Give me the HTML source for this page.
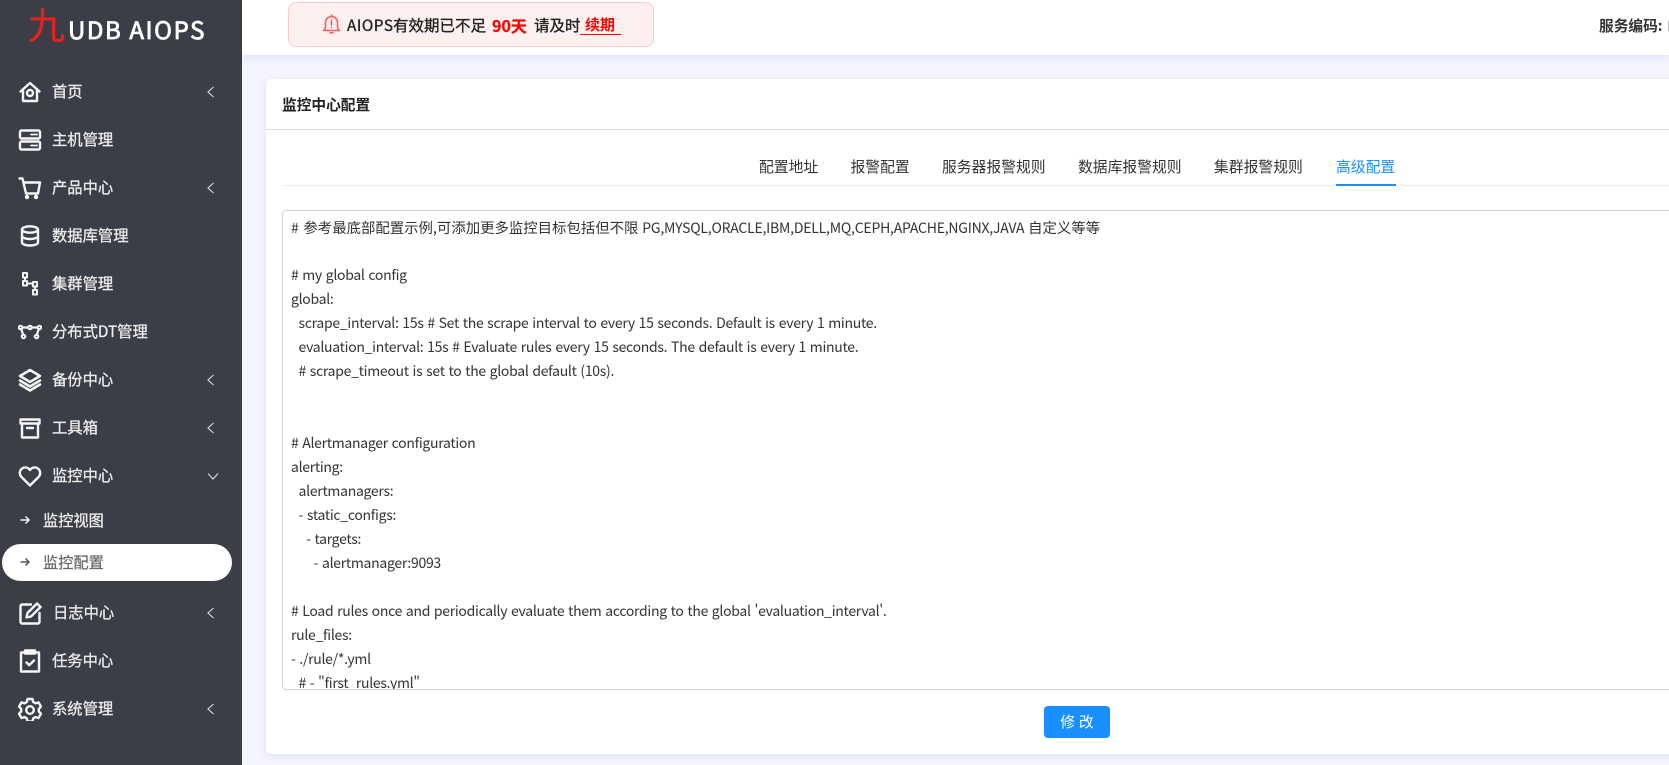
<!DOCTYPE html>
<html lang="zh"><head><meta charset="utf-8"><title>UDB AIOPS</title>
<style>
*{box-sizing:border-box}
html,body{margin:0;padding:0;width:1669px;height:765px;overflow:hidden;background:#f5f5ff;font-family:"Liberation Sans","Noto Sans CJK SC",sans-serif}
.a{position:absolute;white-space:nowrap}
#side{position:absolute;left:0;top:0;width:242px;height:765px;background:#3c3e47}
.m{position:absolute;left:52px;margin-top:-1px;font-size:15.3px;line-height:24px;color:#ececec;font-weight:400;-webkit-text-stroke:.3px #ececec;white-space:nowrap;font-family:"Noto Sans CJK SC",sans-serif}
.i{position:absolute;left:18px;width:24px;height:24px;fill:none;stroke:#f6f6f6;stroke-width:2.4;stroke-linejoin:round;stroke-linecap:round}
.c{position:absolute;left:206px;width:10px;height:14px;fill:none;stroke:#dcdcdc;stroke-width:1.1}
.ar{position:absolute;left:19px;width:12px;height:12px;fill:none;stroke:#f2f2f2;stroke-width:1.5}
.t{position:absolute;top:155px;line-height:24px;font-size:14.8px;color:#333;white-space:nowrap;font-family:"Noto Sans CJK SC",sans-serif}
.b{position:absolute;top:13px;line-height:24px;white-space:nowrap;font-family:"Noto Sans CJK SC",sans-serif;font-size:15.5px;color:#222;-webkit-text-stroke:.35px #222}
#code{position:absolute;left:282px;top:210px;width:1400px;height:480px;border:1px solid #d2d2d2;border-radius:4px;background:#fff;overflow:hidden;padding:4px 0 0 8px}
#code div{height:24px;line-height:24px;white-space:pre;font-family:"Noto Sans CJK SC",sans-serif;font-size:14px;letter-spacing:-.29px;word-spacing:.93px;color:#333}
#code div:first-child{position:relative;top:1px;letter-spacing:-.22px}
#code span{font-size:14.4px;letter-spacing:0;word-spacing:0}
</style></head><body>
<div class="a" style="left:242px;top:0;width:1427px;height:55px;background:#fff;box-shadow:0 2px 8px rgba(110,110,230,.16)"></div>
<div class="a" style="left:288px;top:2px;width:366px;height:45px;background:#fff0f0;border:1px solid #ffc9c9;border-radius:8px"></div>
<svg class="a" style="left:322px;top:14px" width="19" height="21" viewBox="0 0 19 21" fill="none" stroke="#ff5c5c" stroke-width="1.6" stroke-linejoin="round" stroke-linecap="round"><path d="M1.500 16.500c1.400-1 2-2.200 2-4.200V8.500a6 6 0 0 1 12 0v3.800c0 2 .6 3.200 2 4.200z"/><path d="M8 18.700h3M9.500 1v1.300M9.500 6v5M9.500 13.200v.4"/></svg>
<div class="b" style="left:347px;font-size:15.3px;letter-spacing:.55px">AIOPS</div>
<div class="b" style="left:393px">有效期已不足</div>
<div class="b" style="left:492px;font-size:16px;font-weight:700;color:#f00;-webkit-text-stroke:.2px #f00">90天</div>
<div class="b" style="left:534px">请及时</div>
<div class="b" style="left:585px;font-size:15px;font-weight:700;color:#f00;-webkit-text-stroke:0">续期</div>
<div class="a" style="left:580px;top:34px;width:41px;height:1px;background:#f00"></div>
<div class="a" style="left:1599px;top:14px;line-height:24px;font-size:14.7px;font-weight:700;color:#333;font-family:'Noto Sans CJK SC',sans-serif">服务编码:</div>
<div class="a" style="left:1668px;top:21px;width:1px;height:10px;background:#bbb"></div>

<div class="a" style="left:266px;top:79px;width:1440px;height:675px;background:#fff;border-radius:5px;box-shadow:0 2px 8px rgba(110,110,230,.18)"></div>
<div class="a" style="left:282px;top:93px;line-height:24px;font-size:14.7px;font-weight:700;color:#222;font-family:'Noto Sans CJK SC',sans-serif">监控中心配置</div>
<div class="a" style="left:266px;top:129px;width:1403px;height:1px;background:#ddd"></div>
<div class="a" style="left:282px;top:185px;width:1387px;height:1px;background:#eee"></div>
<div class="t" style="left:759px">配置地址</div>
<div class="t" style="left:850.500px">报警配置</div>
<div class="t" style="left:942px">服务器报警规则</div>
<div class="t" style="left:1078px">数据库报警规则</div>
<div class="t" style="left:1214px">集群报警规则</div>
<div class="t" style="left:1336px;color:#1890ff">高级配置</div>
<div class="a" style="left:1336px;top:184px;width:60px;height:2px;background:#1890ff"></div>

<div id="code"><div># <span style="margin-left:1px">参考最底部配置示例,可添加更多监控目标包括但不限</span> PG,MYSQL,ORACLE,IBM,DELL,MQ,CEPH,APACHE,NGINX,JAVA <span>自定义等等</span></div>
<div> </div>
<div># my global config</div>
<div>global:</div>
<div>  scrape_interval: 15s # Set the scrape interval to every 15 seconds. Default is every 1 minute.</div>
<div>  evaluation_interval: 15s # Evaluate rules every 15 seconds. The default is every 1 minute.</div>
<div>  # scrape_timeout is set to the global default (10s).</div>
<div> </div>
<div> </div>
<div># Alertmanager configuration</div>
<div>alerting:</div>
<div>  alertmanagers:</div>
<div>  - static_configs:</div>
<div>    - targets:</div>
<div>      - alertmanager:9093</div>
<div> </div>
<div># Load rules once and periodically evaluate them according to the global 'evaluation_interval'.</div>
<div>rule_files:</div>
<div>- ./rule/*.yml</div>
<div>  # - "first_rules.yml"</div></div>

<div class="a" style="left:1044px;top:706px;width:66px;height:32px;background:#1890ff;border-radius:4px;color:#fff;font-size:14.7px;line-height:32px;text-align:center;letter-spacing:4px;padding-left:4px;font-family:'Noto Sans CJK SC',sans-serif">修改</div>

<div id="side">
<svg class="a" style="left:27px;top:4px" width="44" height="44" viewBox="0 0 44 44"><text x="1" y="35" font-size="37" fill="#e8211c" stroke="#e8211c" stroke-width=".25" font-family="'Noto Sans CJK SC',sans-serif">九</text></svg>
<div class="a" style="left:68px;top:12px;line-height:34px;font-size:24px;font-weight:400;color:#fff;-webkit-text-stroke:.8px #fff;letter-spacing:1.6px;font-family:'Noto Sans CJK SC',sans-serif">UDB AIOPS</div>

<svg class="i" style="top:80px" viewBox="0 0 24 24"><path d="M2.500 11.500 12 3l9.500 8.500M5 10v11h14V10"/><circle cx="12" cy="13" r="3"/></svg>
<div class="m" style="top:80px">首页</div><svg class="c" style="top:85px" viewBox="0 0 10 14"><path d="M7.500 2 2 7l5.500 5"/></svg>

<svg class="i" style="top:128px" viewBox="0 0 24 24"><rect x="2" y="2.500" width="20" height="8" rx="1.500"/><rect x="2" y="13.500" width="20" height="8" rx="1.500"/><path d="M13 6.500h6M13 17.500h6" stroke-width="1.800"/></svg>
<div class="m" style="top:128px">主机管理</div>

<svg class="i" style="top:176px" viewBox="0 0 24 24"><path d="M1.500 2.500h3l3.500 15h12l2-11H5.500"/><circle cx="9" cy="21" r="1" fill="#f2f2f2"/><circle cx="18" cy="21" r="1" fill="#f2f2f2"/></svg>
<div class="m" style="top:176px">产品中心</div><svg class="c" style="top:181px" viewBox="0 0 10 14"><path d="M7.500 2 2 7l5.500 5"/></svg>

<svg class="i" style="top:224px" viewBox="0 0 24 24" stroke-width="2.600"><ellipse cx="12" cy="5.500" rx="8" ry="3.200"/><path d="M4 5.500v13c0 1.700 3.600 3 8 3s8-1.300 8-3v-13M4 12c0 1.700 3.600 3 8 3s8-1.300 8-3"/></svg>
<div class="m" style="top:224px">数据库管理</div>

<svg class="i" style="top:272px;stroke-width:2" viewBox="0 0 24 24"><rect x="5" y="1" width="4" height="4.500"/><rect x="5" y="9" width="4" height="4.500"/><rect x="15" y="10" width="4" height="4.500"/><rect x="15" y="18" width="4" height="4.500"/><path d="M7 5.500V9M9 11.500h6M17 14.500V18"/></svg>
<div class="m" style="top:272px">集群管理</div>

<svg class="i" style="top:320px;stroke-width:2.200" viewBox="0 0 24 24"><circle cx="2.500" cy="7.500" r="1.700"/><circle cx="12" cy="7.500" r="1.700"/><circle cx="21.500" cy="7.500" r="1.700"/><circle cx="5.500" cy="16.500" r="1.700"/><circle cx="18.500" cy="16.500" r="1.700"/><path d="M4.500 7.500h5.500M14 7.500h5.500M3.500 9.500l1.500 5M20.500 9.500l-1.500 5"/></svg>
<div class="m" style="top:320px">分布式DT管理</div>

<svg class="i" style="top:368px;stroke-width:2.500" viewBox="0 0 24 24"><path d="M12 2 22 8l-10 6L2 8zM2 12.500l10 6 10-6M2 16.500l10 6 10-6"/></svg>
<div class="m" style="top:368px">备份中心</div><svg class="c" style="top:373px" viewBox="0 0 10 14"><path d="M7.500 2 2 7l5.500 5"/></svg>

<svg class="i" style="top:416px" viewBox="0 0 24 24"><path d="M2.500 3.500h19v4h-19zM4 7.500v14h16v-14M9 12h6"/></svg>
<div class="m" style="top:416px">工具箱</div><svg class="c" style="top:421px" viewBox="0 0 10 14"><path d="M7.500 2 2 7l5.500 5"/></svg>

<svg class="i" style="top:464px" viewBox="0 0 24 24"><path d="M12 21.500 3.500 13C1 10.500 1.500 7 3.500 5s6-2.500 8.500 1c2.500-3.500 6.500-3 8.500-1s2.500 5.500 0 8z"/></svg>
<div class="m" style="top:464px">监控中心</div><svg class="a" style="left:206px;top:471px;fill:none;stroke:#dcdcdc;stroke-width:1.100" width="14" height="10" viewBox="0 0 14 10"><path d="M2 2.500 7 8l5-5.500"/></svg>

<svg class="ar" style="top:514px" viewBox="0 0 12 12"><path d="M1.500 6h8.500M6.500 2.500 10 6l-3.500 3.500"/></svg>
<div class="m" style="top:509px;left:43px;font-size:15.200px">监控视图</div>

<div class="a" style="left:2px;top:544px;width:230px;height:37px;background:#fff;border-radius:19px"></div>
<svg class="ar" style="top:556px;stroke:#555" viewBox="0 0 12 12"><path d="M1.500 6h8.500M6.500 2.500 10 6l-3.500 3.500"/></svg>
<div class="m" style="top:551px;left:43px;color:#666;-webkit-text-stroke:.2px #666;font-size:15.200px">监控配置</div>

<svg class="i" style="top:601px" viewBox="0 0 24 24"><path d="M13 3.500H4a1.500 1.500 0 0 0-1.500 1.500v16A1.500 1.500 0 0 0 4 22.500h16a1.500 1.500 0 0 0 1.500-1.500v-9"/><path d="M19 2.500 22.500 6 13 15.500l-4.500 1 1-4.500z"/></svg>
<div class="m" style="top:601px;left:53px">日志中心</div><svg class="c" style="top:606px" viewBox="0 0 10 14"><path d="M7.500 2 2 7l5.500 5"/></svg>

<svg class="i" style="top:649px" viewBox="0 0 24 24"><path d="M3 3.500h18v19H3z"/><path d="M7 1.500h10v3H7z" fill="#f2f2f2"/><path d="M8.500 13.500l2.700 2.700 4.800-4.700"/></svg>
<div class="m" style="top:649px">任务中心</div>

<svg class="i" style="top:697px" viewBox="0 0 24 24"><path d="M9.500 2h5l.7 3 2.300 1.300 3-.9 2.500 4.300-2.200 2.200v2.600l2.200 2.200-2.500 4.300-3-.9-2.300 1.300-.7 3h-5l-.7-3-2.300-1.300-3 .9L1 16.700l2.200-2.200v-2.600L1 9.700l2.500-4.300 3 .9 2.300-1.300z"/><circle cx="12" cy="13" r="3.800"/></svg>
<div class="m" style="top:697px">系统管理</div><svg class="c" style="top:702px" viewBox="0 0 10 14"><path d="M7.500 2 2 7l5.500 5"/></svg>
</div>
</body></html>
